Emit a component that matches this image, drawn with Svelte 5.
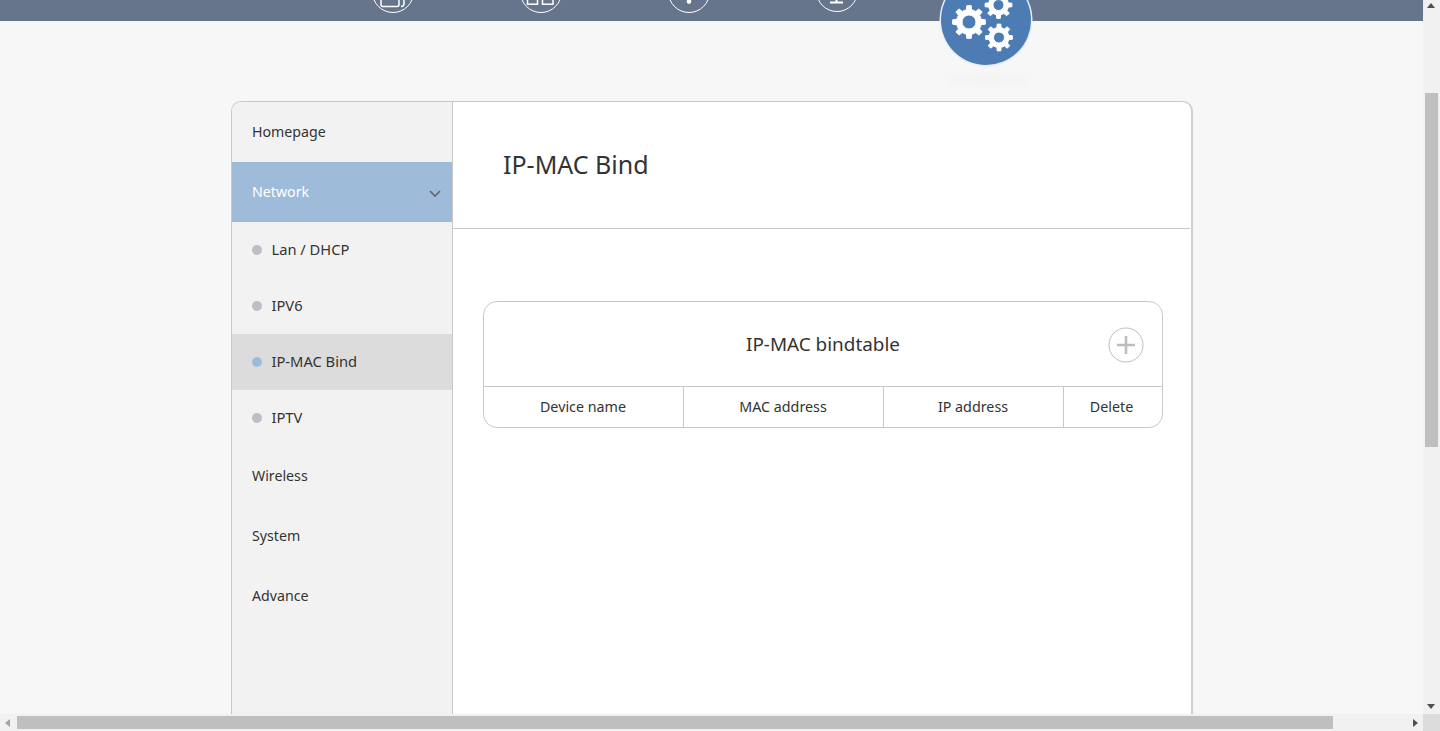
<script>
  function gear(cx, cy, ro, ri, hole, teeth) {
    const step = (Math.PI * 2) / teeth;
    let d = '';
    for (let i = 0; i < teeth; i++) {
      const a = i * step - Math.PI / 2;
      const pts = [
        [ri, a - step * 0.5],
        [ri, a - step * 0.27],
        [ro, a - step * 0.17],
        [ro, a + step * 0.17],
        [ri, a + step * 0.27]
      ];
      for (const [r, t] of pts) {
        d += (d ? 'L' : 'M') + (cx + r * Math.cos(t)).toFixed(2) + ' ' + (cy + r * Math.sin(t)).toFixed(2);
      }
    }
    d += `Z M${cx + hole} ${cy}A${hole} ${hole} 0 1 0 ${cx - hole} ${cy}A${hole} ${hole} 0 1 0 ${cx + hole} ${cy}Z`;
    return d;
  }
  // Gear centres are in the circle's own 90x90 box (its centre sits at y=45).
  const gears = [gear(28, 47, 16.5, 12.5, 7, 8), gear(58, 62.5, 13.5, 10, 5.5, 8), gear(57.5, 30, 13.5, 10, 5.5, 8)];
  const columns = ['Device name', 'MAC address', 'IP address', 'Delete'];
</script>

<div class="window">
  <div class="page">
    <header class="bar">
      <div class="nav-icon">
        <svg viewBox="0 0 42 13" width="42" height="13"><rect x="9" y="-10" width="18" height="16.5" rx="2"/><path d="M32 -2V3.5a3 3 0 0 1-3 3"/></svg>
      </div>
      <div class="nav-icon">
        <svg viewBox="0 0 42 13" width="42" height="13"><rect x="7.5" y="-1" width="10" height="5.2"/><rect x="22.5" y="-1" width="10.5" height="5.2"/></svg>
      </div>
      <div class="nav-icon">
        <svg viewBox="0 0 42 13" width="42" height="13"><circle class="solid" cx="21" cy="1.6" r="2.3"/></svg>
      </div>
      <div class="nav-icon raised">
        <svg viewBox="0 0 42 13" width="42" height="13"><path class="thick" d="M20.5 -4V2M14 2.5h13"/></svg>
      </div>
      <div class="active-icon">
        <svg viewBox="0 0 90 90" width="90" height="90">
          {#each gears as g}<path class="gear" fill-rule="evenodd" d={g}/>{/each}
        </svg>
      </div>
      <div class="active-shadow"></div>
    </header>

    <section class="panel">
      <nav class="side">
        <div class="item">Homepage</div>
        <div class="item open">
          Network
          <svg class="chev" viewBox="0 0 12 8" width="12" height="8"><path d="M1 1l5 5 5-5"/></svg>
        </div>
        <div class="sub"><i></i>Lan / DHCP</div>
        <div class="sub"><i></i>IPV6</div>
        <div class="sub current"><i></i>IP-MAC Bind</div>
        <div class="sub"><i></i>IPTV</div>
        <div class="item">Wireless</div>
        <div class="item">System</div>
        <div class="item">Advance</div>
      </nav>
      <main class="content">
        <h1>IP-MAC Bind</h1>
        <div class="table">
          <div class="caption">
            IP-MAC bindtable
            <svg class="plus" viewBox="0 0 36 36" width="36" height="36"><circle cx="18" cy="18" r="17"/><path d="M18 9v18M9 18h18"/></svg>
          </div>
          <div class="cols">
            {#each columns as c}<div class="col">{c}</div>{/each}
          </div>
        </div>
      </main>
    </section>
  </div>

  <div class="vbar">
    <span class="arrow up"></span>
    <span class="vthumb"></span>
    <span class="arrow down"></span>
  </div>
  <div class="hbar">
    <span class="arrow left"></span>
    <span class="hthumb"></span>
    <span class="arrow right"></span>
  </div>
  <div class="corner"></div>
</div>

<style>
  :global(body) { margin: 0; overflow: hidden; }
  .window {
    width: 1440px; height: 731px; display: grid;
    grid-template-columns: 1423px 17px; grid-template-rows: 714px 17px;
    font-family: "Noto Sans", "Open Sans", sans-serif; color: #333;
    font-size: 14.2px; overflow: hidden;
  }
  .page { background: #f7f7f7; overflow: hidden; position: relative; }
  .bar {
    height: 21px; background: #66758c; display: flex; justify-content: flex-start;
    align-items: flex-start; padding-left: 372px; gap: 106px; box-sizing: border-box;
  }
  .nav-icon {
    width: 42px; height: 13px; flex: none; overflow: hidden;
    position: relative;
  }
  .nav-icon.raised { height: 12px; }
  .nav-icon::before {
    content: ""; position: absolute; left: 0; bottom: 0; width: 40px; height: 40px;
    border: 1px solid #fff; border-radius: 50%;
  }
  .nav-icon svg { position: absolute; left: 0; top: 0; fill: none; stroke: #fff; stroke-width: 1.5; }
  .nav-icon svg .solid { fill: #fff; stroke: none; }
  .nav-icon svg .thick { stroke-width: 2; }
  .active-icon {
    position: absolute; left: 941px; top: -25px; width: 90px; height: 90px;
    border-radius: 50%; background: #4d7cb5;
    box-shadow: 0 0 0 1.5px #e6eef8;
  }
  .active-icon svg { display: block; }
  .gear { fill: #fff; stroke: #fff; stroke-width: 1; stroke-linejoin: round; }
  .active-shadow {
    position: absolute; left: 950px; top: 77px; width: 76px; height: 6px; border-radius: 50%;
    background: #f0f0f0; filter: blur(3px);
  }
  .panel {
    margin: 80px 0 0 231px; width: 962px; height: 760px; box-sizing: border-box;
    border: 1px solid #c8c8c8; border-right: 2px solid #cfcfcf; border-radius: 10px; overflow: hidden;
    background: #fff; display: flex;
  }
  .side { width: 220px; flex: none; background: #f2f2f2; border-right: 1px solid #c8c8c8; }
  .item {
    height: 60px; box-sizing: border-box; display: flex; align-items: center; justify-content: space-between;
    padding: 0 11px 2px 20px;
  }
  .item.open { background: #9fbbda; color: #fff; }
  .chev { fill: none; stroke: #666; stroke-width: 1.7; margin-top: 5px; }
  .sub {
    height: 56px; box-sizing: border-box; display: flex; align-items: center;
    padding: 0 0 2px 20px; gap: 9.5px; font-size: 14.7px;
  }
  .sub i { width: 10px; height: 10px; border-radius: 50%; background: #bdbfc6; flex: none; margin-top: 2px; }
  .sub.current { background: #dcdcdc; }
  .sub.current i { background: #9fbbda; }
  .content { flex: 1; min-width: 0; }
  h1 {
    margin: 0 1px 0 0; box-sizing: border-box; height: 127px; border-bottom: 1px solid #c8c8c8;
    display: flex; align-items: center; padding: 0 0 3px 50px;
    font-size: 25px; font-weight: 400; color: #333;
  }
  .table {
    margin: 72px 0 0 30px; width: 680px; height: 127px; box-sizing: border-box;
    border: 1px solid #c8c8c8; border-radius: 14px; overflow: hidden;
  }
  .caption {
    height: 85px; box-sizing: border-box; border-bottom: 1px solid #c8c8c8; padding-bottom: 1px;
    display: flex; align-items: center; justify-content: center; position: relative;
    font-size: 18.9px;
  }
  .plus { position: absolute; right: 18px; top: 25px; fill: none; stroke: #bdbdbd; }
  .plus path { stroke-width: 2.6; }
  .cols { display: grid; grid-template-columns: 200px 200px 180px 1fr; height: 40px; font-size: 14.3px; }
  .col {
    display: flex; align-items: center; justify-content: center; box-sizing: border-box;
    border-right: 1px solid #c8c8c8; padding: 0 1px 2px 0;
  }
  .col:last-child { border-right: 0; padding-right: 3px; }
  .vbar { background: #f1f1f1; position: relative; }
  .hbar { background: #f1f1f1; position: relative; }
  .corner { background: #dcdcdc; }
  .vthumb { position: absolute; left: 2px; top: 93px; width: 13px; height: 354px; background: #bfbfbf; }
  .hthumb { position: absolute; left: 17px; top: 2px; width: 1316px; height: 13px; background: #bfbfbf; }
  .arrow { position: absolute; width: 0; height: 0; border: 4px solid transparent; }
  .up { left: 4px; top: 3px; border-bottom: 5px solid #505050; border-top: 0; }
  .down { left: 4px; bottom: 5px; border-top: 5px solid #505050; border-bottom: 0; }
  .left { left: 5px; top: 5px; border-right: 5px solid #a3a3a3; border-left: 0; }
  .right { left: 1413px; top: 5px; border-left: 5px solid #505050; border-right: 0; }
</style>
